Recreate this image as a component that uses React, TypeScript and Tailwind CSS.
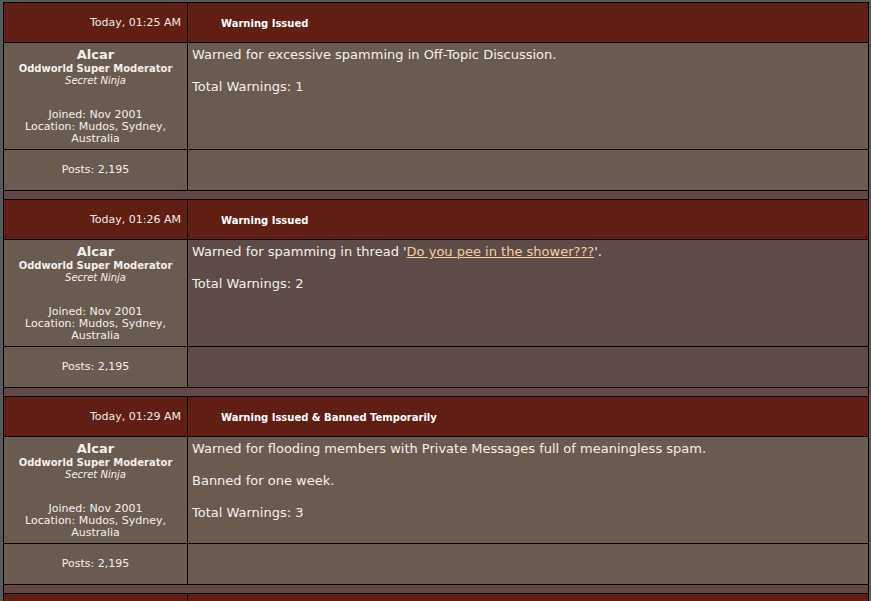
const posts = [
  {
    time: 'Today, 01:25 AM',
    title: 'Warning Issued',
    alt: false,
    body: [
      <>Warned for excessive spamming in Off-Topic Discussion.</>,
      <>Total Warnings: 1</>,
    ],
  },
  {
    time: 'Today, 01:26 AM',
    title: 'Warning Issued',
    alt: true,
    body: [
      <>
        Warned for spamming in thread '
        <a href="#" className="text-[#f3cf9f] underline">Do you pee in the shower???</a>'.
      </>,
      <>Total Warnings: 2</>,
    ],
  },
  {
    time: 'Today, 01:29 AM',
    title: 'Warning Issued & Banned Temporarily',
    alt: false,
    body: [
      <>Warned for flooding members with Private Messages full of meaningless spam.</>,
      <>Banned for one week.</>,
      <>Total Warnings: 3</>,
    ],
  },
];

function Post({ p }: { p: (typeof posts)[number] }) {
  const right = p.alt ? 'bg-[#5e4c4b]' : 'bg-[#6a5b51]';
  return (
    <>
      {/* header */}
      <div className="h-[39px] bg-[#611f14] flex items-center justify-end pt-[2px] pr-[6px] text-[11px] text-[#f2ebe6]">
        {p.time}
      </div>
      <div className="h-[39px] bg-[#611f14] flex items-center pt-[2px] pl-[33px] text-[10px] font-bold text-white">
        {p.title}
      </div>

      {/* user info + message */}
      <div className="h-[106px] bg-[#6a5b51] pt-[4px] px-2 text-center text-[#f4efea]">
        <div className="text-[13px] font-bold leading-[16px]">Alcar</div>
        <div className="text-[10px] font-bold leading-[12px]">Oddworld Super Moderator</div>
        <div className="text-[10px] italic leading-[12px]">Secret Ninja</div>
        <div className="text-[11px] leading-[12px] mt-[22px]">
          <div>Joined: Nov 2001</div>
          <div>Location: Mudos, Sydney, Australia</div>
        </div>
      </div>
      <div className={`h-[106px] ${right} pt-[4px] pl-[4px] text-[13px] leading-[16px] text-[#f4efea]`}>
        {p.body.map((b, i) => (
          <p key={i} className={i > 0 ? 'mt-[16px]' : ''}>
            {b}
          </p>
        ))}
      </div>

      {/* posts row */}
      <div className="h-[40px] bg-[#6a5b51] flex items-center justify-center text-[11px] text-[#f4efea]">
        Posts: 2,195
      </div>
      <div className={`h-[40px] ${right}`} />

      {/* spacer */}
      <div className="col-span-2 h-[8px] bg-[#634846]" />
    </>
  );
}

export default function App() {
  return (
    <div className="w-[871px] h-[601px] overflow-hidden bg-[#595959] pt-[2px] pl-[3px] font-['DejaVu_Sans',Verdana,sans-serif]">
      <div className="w-[866px] grid grid-cols-[183px_680px] gap-px bg-black p-px">
        {posts.map((p, i) => (
          <Post key={i} p={p} />
        ))}
        <div className="h-[39px] bg-[#611f14]" />
        <div className="h-[39px] bg-[#611f14]" />
      </div>
    </div>
  );
}
